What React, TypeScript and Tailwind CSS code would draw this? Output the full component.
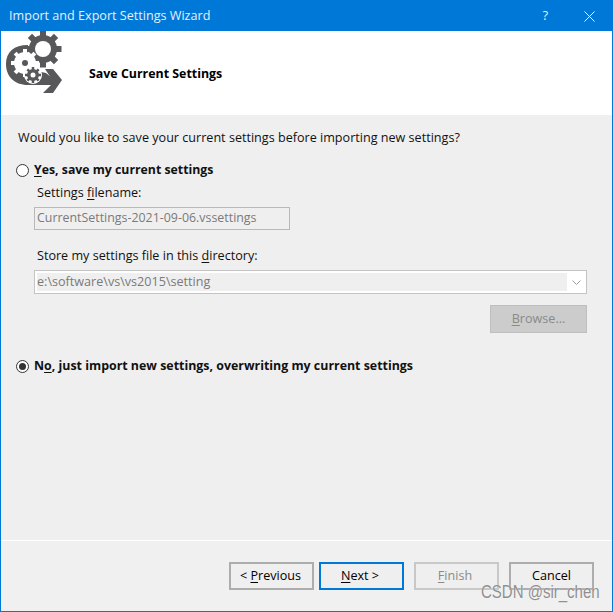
const font = "font-['Open_Sans',sans-serif]";

const gearTeeth = (cx: number, cy: number, r: number, w: number, n: number) =>
  Array.from({ length: n }, (_, i) => (
    <rect
      key={i}
      x={cx - w / 2}
      y={cy - r}
      width={w}
      height={r * 2}
      transform={`rotate(${(i * 180) / n} ${cx} ${cy})`}
    />
  ));

// coordinates follow the page: the svg sits at x=1, y=31
const WizardIcon = () => (
  <svg width="63" height="64" viewBox="1 31 63 64" className="block shrink-0" fill="#58585a">
    {/* arrow band */}
    <path d="M28 45 C14 45 6 52 6 64 C6 76 14 85 28 85 L52 85 L52 78 L46 73 L32 70 L20 64 L28 52 Z" />
    {/* arrow head */}
    <path d="M45 69 L53 69 L62 80 L53 93 L43 93 L51 85 L46 78 L51 78 Z" />
    {/* top gear */}
    <g>
      {gearTeeth(43, 49, 18.5, 6, 4)}
      <circle cx="43" cy="49" r="14" />
    </g>
    <circle cx="43" cy="49" r="8" fill="#fff" />
    {/* white gear over the band */}
    <g fill="#fff">
      {gearTeeth(25, 63, 14, 4, 4)}
      <circle cx="25" cy="63" r="11" />
    </g>
    <circle cx="25" cy="63" r="3" />
    {/* small gear */}
    <circle cx="33" cy="75" r="9" fill="#fff" />
    <g>
      {gearTeeth(33, 75, 8, 2.5, 4)}
      <circle cx="33" cy="75" r="6" />
    </g>
    <circle cx="33" cy="75" r="2.5" fill="#fff" />
  </svg>
);

const U = ({ children }: { children: string }) => <span className="underline underline-offset-2">{children}</span>;

const Radio = ({ checked }: { checked?: boolean }) => (
  <span className="w-[13px] h-[13px] rounded-full border border-[#333] bg-white flex items-center justify-center shrink-0">
    {checked && <span className="w-[7px] h-[7px] rounded-full bg-[#333]" />}
  </span>
);

const Button = ({ children, className }: { children: React.ReactNode; className: string }) => (
  <div className={`w-[85px] h-[28px] flex items-center justify-center bg-[#efefef] ${className}`}>{children}</div>
);

export default function App() {
  return (
    <div className={`relative w-[613px] h-[612px] flex flex-col overflow-hidden border border-[#0078d7] bg-[#efefef] text-[12.6px] text-[#111] ${font}`}>
      <div className="h-[30px] shrink-0 bg-[#0078d7] text-[#e4f0fb] flex items-center pl-2">
        <span>Import and Export Settings Wizard</span>
        <span className="ml-auto mr-[36px] text-[13px]">?</span>
        <svg width="11" height="11" viewBox="0 0 11 11" className="mr-[17px]" stroke="#fff" strokeWidth="1">
          <path d="M0.5 0.5 L10.5 10.5 M10.5 0.5 L0.5 10.5" />
        </svg>
      </div>

      <div className="h-[84px] shrink-0 bg-white flex items-start">
        <WizardIcon />
        <h1 className="ml-[25px] mt-[34px] text-[12.4px] font-bold text-black leading-[18px]">Save Current Settings</h1>
      </div>

      <div className="flex-1 flex flex-col pl-[17px] pr-[25px] pt-[14px]">
        <p className="leading-[18px]">Would you like to save your current settings before importing new settings?</p>
        <label className="flex items-center gap-[5px] mt-[14px] -ml-[2px] text-[12.3px] font-bold leading-[18px]">
          <Radio />
          <span>
            <U>Y</U>es, save my current settings
          </span>
        </label>
        <div className="pl-[16px]">
          <p className="mt-[5px] ml-[3px] leading-[18px]">
            Settings <U>f</U>ilename:
          </p>
          <div className="mt-[5px] w-[256px] h-[23px] border border-[#b9b9b9] bg-[#efefef] text-[12.4px] text-[#7a7a7a] flex items-center pl-[2px]">
            CurrentSettings-2021-09-06.vssettings
          </div>
          <p className="mt-[17px] ml-[3px] leading-[18px]">
            Store my settings file in this <U>d</U>irectory:
          </p>
          <div className="mt-[5px] h-[24px] border border-[#c4c4c4] bg-white flex items-stretch">
            <div className="flex-1 m-[2px] mr-0 bg-[#efefef] text-[#7a7a7a] flex items-center">e:\software\vs\vs2015\setting</div>
            <div className="w-[19px] flex items-center justify-center">
              <svg width="9" height="5" viewBox="0 0 9 5" fill="none" stroke="#9a9a9a">
                <path d="M0.5 0.5 L4.5 4.5 L8.5 0.5" />
              </svg>
            </div>
          </div>
          <div className="flex justify-end mt-[11px]">
            <div className="w-[97px] h-[28px] bg-[#cccccc] border border-[#bfbfbf] text-[#8a8a8a] flex items-center justify-center">
              <span>
                <U>B</U>rowse...
              </span>
            </div>
          </div>
        </div>
        <label className="flex items-center gap-[5px] mt-[24px] -ml-[2px] text-[12.4px] font-bold leading-[18px]">
          <Radio checked />
          <span>
            N<U>o</U>, just import new settings, overwriting my current settings
          </span>
        </label>
      </div>

      <div className="h-[71px] shrink-0 border-t border-white flex justify-end items-start pt-[21px] pr-[18px] bg-[#f0f0f0]">
        <Button className="border-2 border-[#adadad] text-black">
          <span className="-ml-[2px]">
            &lt; <U>P</U>revious
          </span>
        </Button>
        <Button className="ml-[5px] border-2 border-[#0078d7] text-black">
          <span className="-ml-[3px]">
            <U>N</U>ext &gt;
          </span>
        </Button>
        <Button className="ml-[10px] border-2 border-[#c8c8c8] text-[#8a8a8a]">
          <span className="-ml-[3px]">
            <U>F</U>inish
          </span>
        </Button>
        <Button className="ml-[10px] border-2 border-[#adadad] text-black">Cancel</Button>
      </div>

      <span className="absolute left-[480px] top-[578px] whitespace-nowrap text-[15px] leading-[26px] scale-y-[1.25] text-[#8f8f8f] font-['Liberation_Sans',sans-serif] [text-shadow:0_0_1px_#fff]">
        CSDN @sir_chen
      </span>
    </div>
  );
}
